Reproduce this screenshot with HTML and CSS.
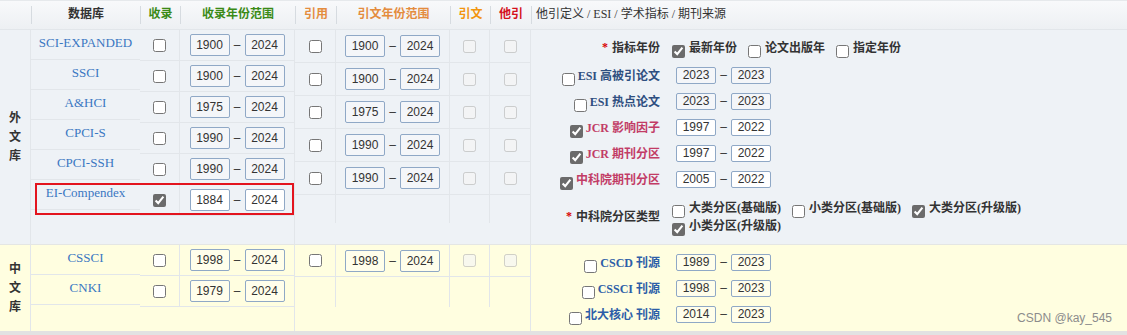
FILE: index.html
```html
<!DOCTYPE html>
<html>
<head>
    <meta charset="utf-8">
    <title>检索范围</title>
    <link rel="stylesheet" href="styles.css">
</head>
<body>
<div class="panel">
    <div class="head">
        <div class="hc"></div>
        <div class="hc">数据库</div>
        <div class="hc green">收录</div>
        <div class="hc green">收录年份范围</div>
        <div class="hc orange">引用</div>
        <div class="hc orange">引文年份范围</div>
        <div class="hc amber">引文</div>
        <div class="hc red">他引</div>
        <div class="hc hc-opt">他引定义 / ESI / 学术指标 / 期刊来源</div>
    </div>

    <div class="section foreign">
        <div class="lib">外<br>文<br>库</div>
        <div class="names">
            <div class="name"><a>SCI-EXPANDED</a></div>
            <div class="name"><a>SSCI</a></div>
            <div class="name"><a>A&amp;HCI</a></div>
            <div class="name"><a>CPCI-S</a></div>
            <div class="name"><a>CPCI-SSH</a></div>
            <div class="name"><a>EI-Compendex</a></div>
        </div>
        <div class="collect">
            <div class="crow">
                <div class="cb"><input type="checkbox"></div>
                <div class="range"><input class="yr" value="1900"><span class="dash">–</span><input class="yr" value="2024"></div>
            </div>
            <div class="crow">
                <div class="cb"><input type="checkbox"></div>
                <div class="range"><input class="yr" value="1900"><span class="dash">–</span><input class="yr" value="2024"></div>
            </div>
            <div class="crow">
                <div class="cb"><input type="checkbox"></div>
                <div class="range"><input class="yr" value="1975"><span class="dash">–</span><input class="yr" value="2024"></div>
            </div>
            <div class="crow">
                <div class="cb"><input type="checkbox"></div>
                <div class="range"><input class="yr" value="1990"><span class="dash">–</span><input class="yr" value="2024"></div>
            </div>
            <div class="crow">
                <div class="cb"><input type="checkbox"></div>
                <div class="range"><input class="yr" value="1990"><span class="dash">–</span><input class="yr" value="2024"></div>
            </div>
            <div class="crow">
                <div class="cb"><input type="checkbox" checked></div>
                <div class="range"><input class="yr on" value="1884"><span class="dash">–</span><input class="yr on" value="2024"></div>
            </div>
        </div>
        <div class="cite">
            <div class="trow">
                <div class="cb"><input type="checkbox"></div>
                <div class="range"><input class="yr" value="1900"><span class="dash">–</span><input class="yr" value="2024"></div>
                <div class="cb"><input type="checkbox" disabled></div>
                <div class="cb"><input type="checkbox" disabled></div>
            </div>
            <div class="trow">
                <div class="cb"><input type="checkbox"></div>
                <div class="range"><input class="yr" value="1900"><span class="dash">–</span><input class="yr" value="2024"></div>
                <div class="cb"><input type="checkbox" disabled></div>
                <div class="cb"><input type="checkbox" disabled></div>
            </div>
            <div class="trow">
                <div class="cb"><input type="checkbox"></div>
                <div class="range"><input class="yr" value="1975"><span class="dash">–</span><input class="yr" value="2024"></div>
                <div class="cb"><input type="checkbox" disabled></div>
                <div class="cb"><input type="checkbox" disabled></div>
            </div>
            <div class="trow">
                <div class="cb"><input type="checkbox"></div>
                <div class="range"><input class="yr" value="1990"><span class="dash">–</span><input class="yr" value="2024"></div>
                <div class="cb"><input type="checkbox" disabled></div>
                <div class="cb"><input type="checkbox" disabled></div>
            </div>
            <div class="trow">
                <div class="cb"><input type="checkbox"></div>
                <div class="range"><input class="yr" value="1990"><span class="dash">–</span><input class="yr" value="2024"></div>
                <div class="cb"><input type="checkbox" disabled></div>
                <div class="cb"><input type="checkbox" disabled></div>
            </div>
            <div class="trow empty">
                <div class="cb"></div>
                <div class="range"></div>
                <div class="cb"></div>
                <div class="cb"></div>
            </div>
        </div>
        <div class="opts">
            <div class="orow first">
                <div class="olabel"><span class="star">*</span>指标年份</div>
                <div class="choices">
                    <label class="choice"><input type="checkbox" checked>最新年份</label>
                    <label class="choice"><input type="checkbox">论文出版年</label>
                    <label class="choice"><input type="checkbox">指定年份</label>
                </div>
            </div>
            <div class="orow">
                <label class="olabel c-navy"><input type="checkbox">ESI 高被引论文</label>
                <div class="range sm"><input class="yr" value="2023"><span class="dash">–</span><input class="yr" value="2023"></div>
            </div>
            <div class="orow">
                <label class="olabel c-navy"><input type="checkbox">ESI 热点论文</label>
                <div class="range sm"><input class="yr" value="2023"><span class="dash">–</span><input class="yr" value="2023"></div>
            </div>
            <div class="orow">
                <label class="olabel c-rose"><input type="checkbox" checked>JCR 影响因子</label>
                <div class="range sm"><input class="yr on" value="1997"><span class="dash">–</span><input class="yr on" value="2022"></div>
            </div>
            <div class="orow">
                <label class="olabel c-rose"><input type="checkbox" checked>JCR 期刊分区</label>
                <div class="range sm"><input class="yr on" value="1997"><span class="dash">–</span><input class="yr on" value="2022"></div>
            </div>
            <div class="orow">
                <label class="olabel c-rose"><input type="checkbox" checked>中科院期刊分区</label>
                <div class="range sm"><input class="yr on" value="2005"><span class="dash">–</span><input class="yr on" value="2022"></div>
            </div>
            <div class="orow type">
                <div class="olabel"><span class="star">*</span>中科院分区类型</div>
                <div class="choices wrap">
                    <label class="choice"><input type="checkbox">大类分区(基础版)</label>
                    <label class="choice"><input type="checkbox">小类分区(基础版)</label>
                    <label class="choice"><input type="checkbox" checked>大类分区(升级版)</label>
                    <label class="choice"><input type="checkbox" checked>小类分区(升级版)</label>
                </div>
            </div>
        </div>
        <div class="pick"></div>
    </div>

    <div class="section domestic">
        <div class="lib">中<br>文<br>库</div>
        <div class="names">
            <div class="name"><a>CSSCI</a></div>
            <div class="name"><a>CNKI</a></div>
        </div>
        <div class="collect">
            <div class="crow">
                <div class="cb"><input type="checkbox"></div>
                <div class="range"><input class="yr" value="1998"><span class="dash">–</span><input class="yr" value="2024"></div>
            </div>
            <div class="crow">
                <div class="cb"><input type="checkbox"></div>
                <div class="range"><input class="yr" value="1979"><span class="dash">–</span><input class="yr" value="2024"></div>
            </div>
        </div>
        <div class="cite">
            <div class="trow short">
                <div class="cb"><input type="checkbox"></div>
                <div class="range"><input class="yr" value="1998"><span class="dash">–</span><input class="yr" value="2024"></div>
                <div class="cb"><input type="checkbox" disabled></div>
                <div class="cb"><input type="checkbox" disabled></div>
            </div>
            <div class="trow empty tall">
                <div class="cb"></div>
                <div class="range"></div>
                <div class="cb"></div>
                <div class="cb"></div>
            </div>
        </div>
        <div class="opts">
            <div class="orow">
                <label class="olabel c-blue"><input type="checkbox">CSCD 刊源</label>
                <div class="range sm"><input class="yr" value="1989"><span class="dash">–</span><input class="yr" value="2023"></div>
            </div>
            <div class="orow">
                <label class="olabel c-blue"><input type="checkbox">CSSCI 刊源</label>
                <div class="range sm"><input class="yr" value="1998"><span class="dash">–</span><input class="yr" value="2023"></div>
            </div>
            <div class="orow">
                <label class="olabel c-blue"><input type="checkbox">北大核心 刊源</label>
                <div class="range sm"><input class="yr" value="2014"><span class="dash">–</span><input class="yr" value="2023"></div>
            </div>
        </div>
    </div>

    <div class="mark">CSDN @kay_545</div>
</div>
</body>
</html>
```

FILE: styles.css
```css
:root {
    --line: #e2e6ea;
    --foreign-bg: #eef2f6;
    --domestic-bg: #fffee0;
    --input-border: #8fa8c6;
}

* {
    box-sizing: border-box;
}

body {
    margin: 0;
    background: #fff;
    color: #333;
    font-family: "Liberation Serif", "Noto Sans CJK SC", serif;
    font-size: 12px;
}

.panel {
    position: relative;
    width: 1127px;
    border-bottom: 4px solid #e2e2e2;
}

/* header */
.head {
    display: grid;
    grid-template-columns: 31px 109px 40px 115px 41px 114px 40px 41px 1fr;
    height: 30px;
    padding: 5px 0;
    background: linear-gradient(#f8f9fb, #edf0f3);
    border-top: 1px solid #e6e9ec;
    border-bottom: 1px solid var(--line);
}

.hc {
    border-left: 1px solid #d6dbe0;
    text-align: center;
    font-weight: bold;
    line-height: 17px;
}

.hc:first-child {
    border-left: 0;
}

.hc-opt {
    text-align: left;
    padding-left: 4px;
    font-weight: normal;
}

.green { color: #3a8a16; }
.orange { color: #e48c3e; }
.amber { color: #f2950e; }
.red { color: #d4101c; }

/* sections */
.section {
    position: relative;
    display: flex;
}

.foreign {
    height: 214px;
    background: var(--foreign-bg);
}

.domestic {
    height: 87px;
    background: var(--domestic-bg);
    border-top: 1px solid #e4e6e4;
}

.lib {
    width: 31px;
    display: flex;
    align-items: center;
    justify-content: center;
    border-right: 1px solid var(--line);
    font-weight: bold;
    line-height: 19px;
    text-align: center;
}

.names {
    width: 109px;
}

.name {
    height: 30px;
    line-height: 26px;
    text-align: center;
    border-bottom: 1px solid var(--line);
}

.name a {
    color: #3a77c2;
    font-size: 13px;
}

.collect {
    width: 155px;
    border-right: 1px solid var(--line);
}

.crow {
    display: grid;
    grid-template-columns: 40px 1fr;
    height: 31px;
    border-bottom: 1px solid var(--line);
}

.cite {
    width: 236px;
    border-right: 1px solid var(--line);
}

.trow {
    display: grid;
    grid-template-columns: 41px 114px 40px 1fr;
    height: 33px;
    border-bottom: 1px solid var(--line);
}

.trow.short {
    height: 32px;
}

.trow.empty {
    height: 28px;
    border-bottom: 0;
}

.trow.empty.tall {
    height: 30px;
}

.cb {
    display: flex;
    align-items: center;
    justify-content: center;
    border-right: 1px solid var(--line);
}

.trow .cb:last-child {
    border-right: 0;
}

.range {
    display: flex;
    align-items: center;
    justify-content: center;
}

.trow .range {
    border-right: 1px solid var(--line);
}

.dash {
    width: 15px;
    text-align: center;
    font-family: "Liberation Sans", sans-serif;
    color: #333;
}

input[type="checkbox"] {
    width: 13px;
    height: 13px;
    margin: 0;
    accent-color: #6b6b6b;
}

.yr {
    width: 40px;
    height: 22px;
    padding: 0;
    border: 1px solid var(--input-border);
    border-radius: 2px;
    background: rgba(255, 255, 255, 0.35);
    color: #333;
    font-family: "Liberation Sans", sans-serif;
    font-size: 12px;
    text-align: center;
}

.yr.on {
    background: #fff;
}

/* right options panel */
.opts {
    flex: 1;
    padding-top: 2px;
}

.domestic .opts {
    padding-top: 4px;
}

.orow {
    display: flex;
    align-items: center;
    height: 26px;
}

.orow.first {
    height: 30px;
}

.orow.type {
    height: 38px;
    margin-top: 5px;
}

.olabel {
    width: 129px;
    display: flex;
    align-items: center;
    justify-content: flex-end;
    font-weight: bold;
}

.olabel input {
    margin: 8px 3px 0 0;
}

.star {
    color: #d80000;
    margin-right: 4px;
}

.c-navy { color: #2f4f80; }
.c-rose { color: #c23c66; }
.c-blue { color: #2d5ea8; }

.range.sm {
    margin-left: 16px;
    justify-content: flex-start;
}

.sm .yr {
    height: 17px;
}

.choices {
    display: flex;
    flex-wrap: wrap;
    column-gap: 11px;
    max-width: 370px;
    margin-left: 12px;
}

.choice {
    display: flex;
    align-items: center;
    height: 18px;
    font-weight: bold;
}

.choice input {
    margin: 8px 4px 0 0;
}

/* annotation box and watermark */
.pick {
    position: absolute;
    left: 35px;
    top: 153px;
    width: 259px;
    height: 32px;
    border: 2px solid #e3141e;
}

.mark {
    position: absolute;
    right: 15px;
    bottom: 6px;
    color: #8c8c8c;
    font-family: "Liberation Sans", sans-serif;
    font-size: 12px;
    line-height: 14px;
}
```
